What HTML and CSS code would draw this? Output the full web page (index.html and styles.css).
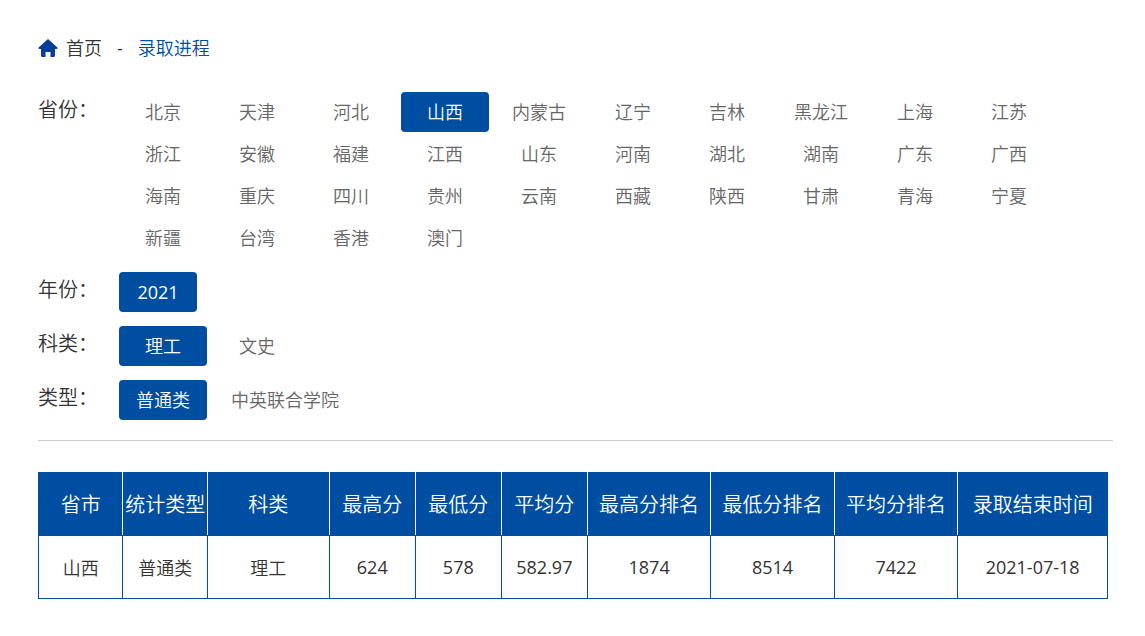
FILE: index.html
```html
<!DOCTYPE html>
<html lang="zh-CN">
<head>
    <meta charset="UTF-8">
    <meta name="viewport" content="width=device-width, initial-scale=1.0">
    <title>录取进程</title>
    <link rel="stylesheet" href="styles.css">
</head>
<body>
    <div class="container">
        <nav class="breadcrumb">
            <svg class="home-icon" viewBox="0 0 20 18" aria-hidden="true">
                <path d="M10 0 L19.4 8.6 Q20 10 18.6 10 H17 V16.5 Q17 18 15.5 18 H12.5 V13 H7.5 V18 H4.5 Q3 18 3 16.5 V10 H1.4 Q0 10 0.6 8.6 Z"/>
            </svg>
            <a href="#" class="home-link">首页</a>
            <span class="separator">-</span>
            <a href="#" class="current">录取进程</a>
        </nav>

        <div class="filters">
            <div class="filter-row" role="group" aria-labelledby="provinceLabel">
                <span class="filter-label" id="provinceLabel">省份：</span>
                <div class="options options-grid">
                    <button type="button" class="option">北京</button>
                    <button type="button" class="option">天津</button>
                    <button type="button" class="option">河北</button>
                    <button type="button" class="option active">山西</button>
                    <button type="button" class="option">内蒙古</button>
                    <button type="button" class="option">辽宁</button>
                    <button type="button" class="option">吉林</button>
                    <button type="button" class="option">黑龙江</button>
                    <button type="button" class="option">上海</button>
                    <button type="button" class="option">江苏</button>
                    <button type="button" class="option">浙江</button>
                    <button type="button" class="option">安徽</button>
                    <button type="button" class="option">福建</button>
                    <button type="button" class="option">江西</button>
                    <button type="button" class="option">山东</button>
                    <button type="button" class="option">河南</button>
                    <button type="button" class="option">湖北</button>
                    <button type="button" class="option">湖南</button>
                    <button type="button" class="option">广东</button>
                    <button type="button" class="option">广西</button>
                    <button type="button" class="option">海南</button>
                    <button type="button" class="option">重庆</button>
                    <button type="button" class="option">四川</button>
                    <button type="button" class="option">贵州</button>
                    <button type="button" class="option">云南</button>
                    <button type="button" class="option">西藏</button>
                    <button type="button" class="option">陕西</button>
                    <button type="button" class="option">甘肃</button>
                    <button type="button" class="option">青海</button>
                    <button type="button" class="option">宁夏</button>
                    <button type="button" class="option">新疆</button>
                    <button type="button" class="option">台湾</button>
                    <button type="button" class="option">香港</button>
                    <button type="button" class="option">澳门</button>
                </div>
            </div>
            <div class="filter-row" role="group" aria-labelledby="yearLabel">
                <span class="filter-label" id="yearLabel">年份：</span>
                <div class="options">
                    <button type="button" class="option option-year active">2021</button>
                </div>
            </div>
            <div class="filter-row" role="group" aria-labelledby="subjectLabel">
                <span class="filter-label" id="subjectLabel">科类：</span>
                <div class="options options-grid">
                    <button type="button" class="option active">理工</button>
                    <button type="button" class="option">文史</button>
                </div>
            </div>
            <div class="filter-row" role="group" aria-labelledby="typeLabel">
                <span class="filter-label" id="typeLabel">类型：</span>
                <div class="options">
                    <button type="button" class="option active">普通类</button>
                    <button type="button" class="option">中英联合学院</button>
                </div>
            </div>
        </div>

        <div class="results">
            <table>
                <colgroup>
                    <col class="col-narrow">
                    <col class="col-narrow">
                    <col class="col-subject">
                    <col class="col-score">
                    <col class="col-score">
                    <col class="col-score">
                    <col class="col-rank">
                    <col class="col-rank">
                    <col class="col-rank">
                    <col>
                </colgroup>
                <thead>
                    <tr>
                        <th>省市</th>
                        <th>统计类型</th>
                        <th>科类</th>
                        <th>最高分</th>
                        <th>最低分</th>
                        <th>平均分</th>
                        <th>最高分排名</th>
                        <th>最低分排名</th>
                        <th>平均分排名</th>
                        <th>录取结束时间</th>
                    </tr>
                </thead>
                <tbody>
                    <tr>
                        <td>山西</td>
                        <td>普通类</td>
                        <td>理工</td>
                        <td class="number">624</td>
                        <td class="number">578</td>
                        <td class="number">582.97</td>
                        <td class="number">1874</td>
                        <td class="number">8514</td>
                        <td class="number">7422</td>
                        <td class="number">2021-07-18</td>
                    </tr>
                </tbody>
            </table>
        </div>
    </div>
</body>
</html>
```

FILE: styles.css
```css
* {
    box-sizing: border-box;
}

body {
    margin: 0;
    background-color: #fff;
    color: #333;
    font-family: "Open Sans", "Noto Sans CJK SC", sans-serif;
    font-size: 18px;
    font-weight: 350;
}

.container {
    padding: 32px 32px 32px 38px;
}

a {
    color: inherit;
    text-decoration: none;
}

/* Breadcrumb */
.breadcrumb {
    display: flex;
    align-items: center;
    line-height: 32px;
}

.home-icon {
    width: 20px;
    height: 18px;
    margin-right: 8px;
    fill: #004098;
}

.separator {
    margin: 0 15px;
    font-weight: 400;
}

.current {
    color: #004ea2;
}

/* Filters */
.filters {
    display: flex;
    flex-direction: column;
    gap: 14px;
    margin-top: 28px;
    padding-bottom: 20px;
    border-bottom: 1px solid #ccc;
}

.filter-row {
    display: flex;
}

.filter-label {
    flex: 0 0 81px;
    font-size: 20px;
    line-height: 36px;
}

.options {
    flex: 1;
    display: flex;
    flex-wrap: wrap;
    gap: 2px 8px;
}

.options-grid {
    display: grid;
    grid-template-columns: repeat(auto-fill, 88px);
    column-gap: 6px;
}

.option {
    min-width: 88px;
    height: 40px;
    padding: 0 16px;
    border: none;
    border-radius: 4px;
    background: none;
    color: #666;
    font: inherit;
    line-height: 40px;
    white-space: nowrap;
    cursor: pointer;
}

.option-year {
    min-width: 78px;
    font-weight: 400;
}

.option.active {
    background-color: #004ea2;
    color: #fff;
}

/* Results table */
.results {
    margin-top: 31px;
    padding-right: 5px;
}

table {
    width: 100%;
    table-layout: fixed;
    border-collapse: collapse;
    text-align: center;
}

.col-narrow {
    width: 7.9%;
}

.col-subject {
    width: 11.4%;
}

.col-score {
    width: 8.05%;
}

.col-rank {
    width: 11.55%;
}

th,
td {
    height: 63px;
    padding: 0;
    border: 1px solid #004ea2;
    font-weight: 350;
    white-space: nowrap;
}

th {
    padding-bottom: 2px;
    background-color: #004ea2;
    color: #fff;
    font-size: 20px;
}

th + th {
    border-left-color: #fff;
}

th:not(:last-child) {
    border-right-color: #fff;
}

.number {
    font-weight: 400;
}
```
